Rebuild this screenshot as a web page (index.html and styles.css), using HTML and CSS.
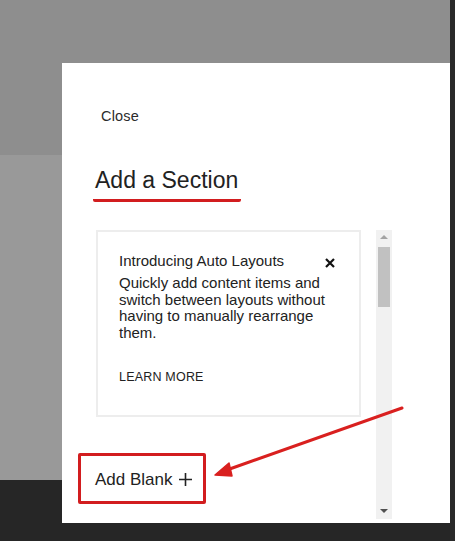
FILE: index.html
```html
<!DOCTYPE html>
<html lang="en">
<head>
    <meta charset="UTF-8">
    <meta name="viewport" content="width=device-width, initial-scale=1.0">
    <title>Add a Section</title>
    <link rel="stylesheet" href="styles.css">
</head>
<body>
    <div class="screen">
        <div class="main">
            <div class="backdrop-top"></div>
            <div class="backdrop-row">
                <div class="side">
                    <div class="side-top"></div>
                    <div class="side-mid"></div>
                    <div class="side-bottom"></div>
                </div>
                <div class="modal-col">
                    <div class="modal">
                        <div class="close-link">Close</div>
                        <h1 class="modal-title">Add a Section</h1>

                        <div class="panel">
                            <div class="panel-content">
                                <div class="promo-card">
                                    <div class="promo-head">
                                        <span class="promo-title">Introducing Auto Layouts</span>
                                        <svg class="promo-close" width="10" height="10" viewBox="0 0 10 10" stroke="#111" stroke-width="2.2">
                                            <path d="M1 1l8 8M9 1l-8 8"/>
                                        </svg>
                                    </div>
                                    <p class="promo-text">Quickly add content items and switch between layouts without having to manually rearrange them.</p>
                                    <div class="promo-link">LEARN MORE</div>
                                </div>

                                <button class="add-blank">
                                    Add Blank
                                    <svg width="13" height="13" viewBox="0 0 13 13" stroke="#222" stroke-width="1.6">
                                        <path d="M6.5 0v13M0 6.5h13"/>
                                    </svg>
                                </button>
                            </div>

                            <div class="scrollbar">
                                <div class="scroll-arrow up"></div>
                                <div class="scroll-thumb"></div>
                                <div class="scroll-track"></div>
                                <div class="scroll-arrow down"></div>
                            </div>
                        </div>
                    </div>
                    <div class="modal-foot"></div>
                </div>
            </div>
        </div>
        <div class="edge"></div>

        <!-- annotation arrow -->
        <svg class="annotation" width="455" height="541" viewBox="0 0 455 541">
            <path d="M402 408L224 471" stroke="#d9201f" stroke-width="3" stroke-linecap="round" fill="none"/>
            <path d="M215 475L229 463L232 476Z" fill="#d9201f" stroke="#d9201f" stroke-width="1.5" stroke-linejoin="round"/>
        </svg>
    </div>
</body>
</html>
```

FILE: styles.css
```css
:root {
    --gray-dark: #8e8e8e;
    --gray-light: #999999;
    --night: #262626;
    --text-primary: #222222;
    --border-color: #e6e6e6;
    --red: #d21d1f;
}

* {
    margin: 0;
    padding: 0;
    box-sizing: border-box;
    font-family: "Liberation Sans", Arial, sans-serif;
}

body {
    width: 455px;
    height: 541px;
    overflow: hidden;
    background: var(--night);
}

.screen {
    position: relative;
    display: flex;
    height: 541px;
}

.main {
    flex: 1;
    display: flex;
    flex-direction: column;
}

.backdrop-top {
    height: 63px;
    background: var(--gray-dark);
}

.backdrop-row {
    flex: 1;
    display: flex;
}

.side {
    width: 62px;
    display: flex;
    flex-direction: column;
}

.side-top {
    height: 92px;
    background: var(--gray-dark);
}

.side-mid {
    height: 325px;
    background: var(--gray-light);
}

.side-bottom {
    flex: 1;
    background: var(--night);
}

.modal-col {
    flex: 1;
    display: flex;
    flex-direction: column;
}

.modal {
    height: 460px;
    background: #ffffff;
    padding: 45px 0 0 33px;
}

.modal-foot {
    flex: 1;
    background: var(--night);
}

.edge {
    width: 5px;
    background: #2a2a2a;
}

.close-link {
    font-size: 14.5px;
    line-height: 16px;
    color: #2b2b2b;
    margin-left: 6px;
    letter-spacing: 0.2px;
}

.modal-title {
    display: inline-block;
    margin-top: 43px;
    margin-left: -2px;
    font-size: 23px;
    line-height: 26px;
    font-weight: 400;
    color: var(--text-primary);
    padding: 0 3px 6px 2px;
    border-bottom: 3px solid var(--red);
    border-radius: 0 0 2px 2px;
}

.panel {
    display: flex;
    height: 289px;
    margin-top: 28px;
}

.panel-content {
    width: 281px;
    display: flex;
    flex-direction: column;
    align-items: flex-start;
}

.promo-card {
    width: 265px;
    height: 187px;
    margin-left: 1px;
    border: 2px solid #ededed;
    padding: 20px 22px 0 21px;
}

.promo-head {
    display: flex;
    justify-content: space-between;
    align-items: center;
    padding-right: 2px;
}

.promo-title {
    font-size: 15px;
    line-height: 18px;
    color: var(--text-primary);
}

.promo-close {
    margin-top: 3px;
}

.promo-text {
    margin-top: 5px;
    font-size: 15px;
    line-height: 16.7px;
    color: var(--text-primary);
}

.promo-link {
    margin-top: 28px;
    font-size: 12.5px;
    letter-spacing: 0.2px;
    color: var(--text-primary);
}

.add-blank {
    margin-top: 36px;
    margin-left: -17px;
    width: 128px;
    height: 51px;
    padding-left: 14px;
    display: flex;
    align-items: center;
    gap: 6px;
    background: #ffffff;
    border: 3px solid var(--red);
    border-radius: 2px;
    font-size: 17px;
    color: var(--text-primary);
    padding-top: 2px;
}

.scrollbar {
    width: 16px;
    background: #f1f1f1;
    display: flex;
    flex-direction: column;
    align-items: center;
}

.scroll-arrow {
    width: 0;
    height: 0;
    border-left: 4px solid transparent;
    border-right: 4px solid transparent;
}

.scroll-arrow.up {
    margin-top: 5px;
    border-bottom: 4px solid #a3a3a3;
}

.scroll-arrow.down {
    margin-bottom: 6px;
    border-top: 4px solid #505050;
}

.scroll-thumb {
    width: 12px;
    height: 60px;
    margin-top: 8px;
    background: #c1c1c1;
}

.scroll-track {
    flex: 1;
}

.annotation {
    position: absolute;
    top: 0;
    left: 0;
    pointer-events: none;
}
```
